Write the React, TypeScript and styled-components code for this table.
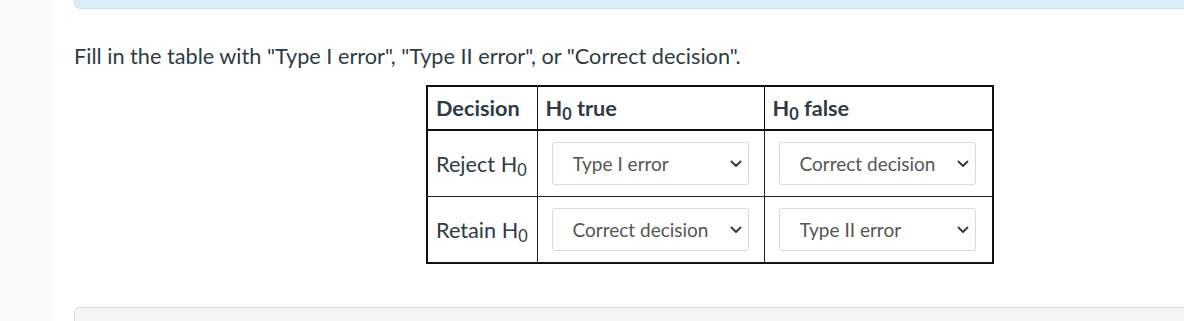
import React from 'react';
import styled, { createGlobalStyle } from 'styled-components';

const GlobalStyle = createGlobalStyle`
    html, body {
        margin: 0;
        padding: 0;
        background: #fff;
        font-family: Lato, "Open Sans", "Liberation Sans", sans-serif;
        color: #2d3b45;
    }
`

const options = ['Type I error', 'Type II error', 'Correct decision'];

const rows = [
    { label: 'Reject', answers: ['Type I error', 'Correct decision'] },
    { label: 'Retain', answers: ['Correct decision', 'Type II error'] },
];

const Chevron: React.FC = () => (
    <StyledChevron width="12" height="8" viewBox="0 0 12 8">
        <path d="M1.5 1.5 L6 6 L10.5 1.5" fill="none" stroke="#3a3a3a" strokeWidth="1.9" strokeLinecap="round" strokeLinejoin="round" />
    </StyledChevron>
);

const Dropdown: React.FC<{ value: string }> = ({ value }) => (
    <StyledSelectWrap>
        <StyledSelect defaultValue={ value }>
            { options.map(o => <option key={ o }>{ o }</option>) }
        </StyledSelect>
        <Chevron />
    </StyledSelectWrap>
);

const H0: React.FC = () => <>H<sub>0</sub></>;

export default function App() {
    return (
        <StyledPage>
            <GlobalStyle />
            <StyledSidebar />
            <StyledMain>
                <StyledInfoBar />
                <StyledQuestion>
                    Fill in the table with "Type I error", "Type II error", or "Correct decision".
                </StyledQuestion>
                <StyledTable>
                    <colgroup>
                        <col style={{ width: 110 }} />
                        <col style={{ width: 227 }} />
                        <col style={{ width: 229 }} />
                    </colgroup>
                    <thead>
                        <tr>
                            <StyledHeadCell>Decision</StyledHeadCell>
                            <StyledHeadCell><H0 /> true</StyledHeadCell>
                            <StyledHeadCell><H0 /> false</StyledHeadCell>
                        </tr>
                    </thead>
                    <tbody>
                        { rows.map(r => (
                            <tr key={ r.label }>
                                <StyledLabelCell>{ r.label } <H0 /></StyledLabelCell>
                                { r.answers.map((a, i) => (
                                    <StyledAnswerCell key={ i }><Dropdown value={ a } /></StyledAnswerCell>
                                )) }
                            </tr>
                        )) }
                    </tbody>
                </StyledTable>
                <StyledFooterBox />
            </StyledMain>
        </StyledPage>
    );
}

const StyledPage = styled.div`
    display: flex;
    width: 1184px;
    height: 321px;
    overflow: hidden;
`
const StyledSidebar = styled.div`
    width: 53px;
    flex-shrink: 0;
    background: #fafafa;
`
const StyledMain = styled.div`
    flex: 1;
    margin-left: 21px;
    display: flex;
    flex-direction: column;
`
const StyledInfoBar = styled.div`
    flex-shrink: 0;
    height: 8px;
    background: #d9edf7;
    border-bottom: 1px solid #c8e6f4;
    border-left: 1px solid #c8e6f4;
    border-bottom-left-radius: 6px;
`
const StyledQuestion = styled.p`
    margin: 32px 0 0;
    font-size: 21.7px;
    line-height: 30px;
    color: #2d3b45;
`
const StyledTable = styled.table`
    margin: 14px 0 0 352px;
    width: 566px;
    table-layout: fixed;
    border-collapse: collapse;
    border: 2px solid #111;
    font-size: 21.7px;
    color: #2d3b45;

    sub {
        font-size: 0.75em;
        line-height: 0;
        vertical-align: -0.25em;
    }
`
const StyledHeadCell = styled.th`
    text-align: left;
    font-weight: 700;
    height: 42px;
    padding: 0 8px;
    border: 1px solid #111;
    border-bottom: 2px solid #111;
`
const StyledLabelCell = styled.td`
    padding: 0 8px;
    height: 65px;
    border: 1px solid #222;
    border-top-color: #555;
    white-space: nowrap;
`
const StyledAnswerCell = styled.td`
    padding: 0 14px;
    border: 1px solid #222;
    border-top-color: #555;
`
const StyledSelectWrap = styled.div`
    position: relative;
    width: 197px;
    height: 43px;
`
const StyledSelect = styled.select`
    appearance: none;
    width: 100%;
    height: 100%;
    padding: 0 30px 0 20px;
    border: 1px solid #dadada;
    border-radius: 3px;
    background: #fff;
    font-family: Lato, "Open Sans", "Liberation Sans", sans-serif;
    font-size: 19px;
    color: #555;
    outline: none;
`
const StyledChevron = styled.svg`
    position: absolute;
    right: 7px;
    top: 18px;
    pointer-events: none;
`
const StyledFooterBox = styled.div`
    flex-shrink: 0;
    margin-top: 43px;
    height: 40px;
    background: #f5f5f5;
    border-top: 1px solid #dcdcdc;
    border-left: 1px solid #dcdcdc;
    border-top-left-radius: 6px;
`
